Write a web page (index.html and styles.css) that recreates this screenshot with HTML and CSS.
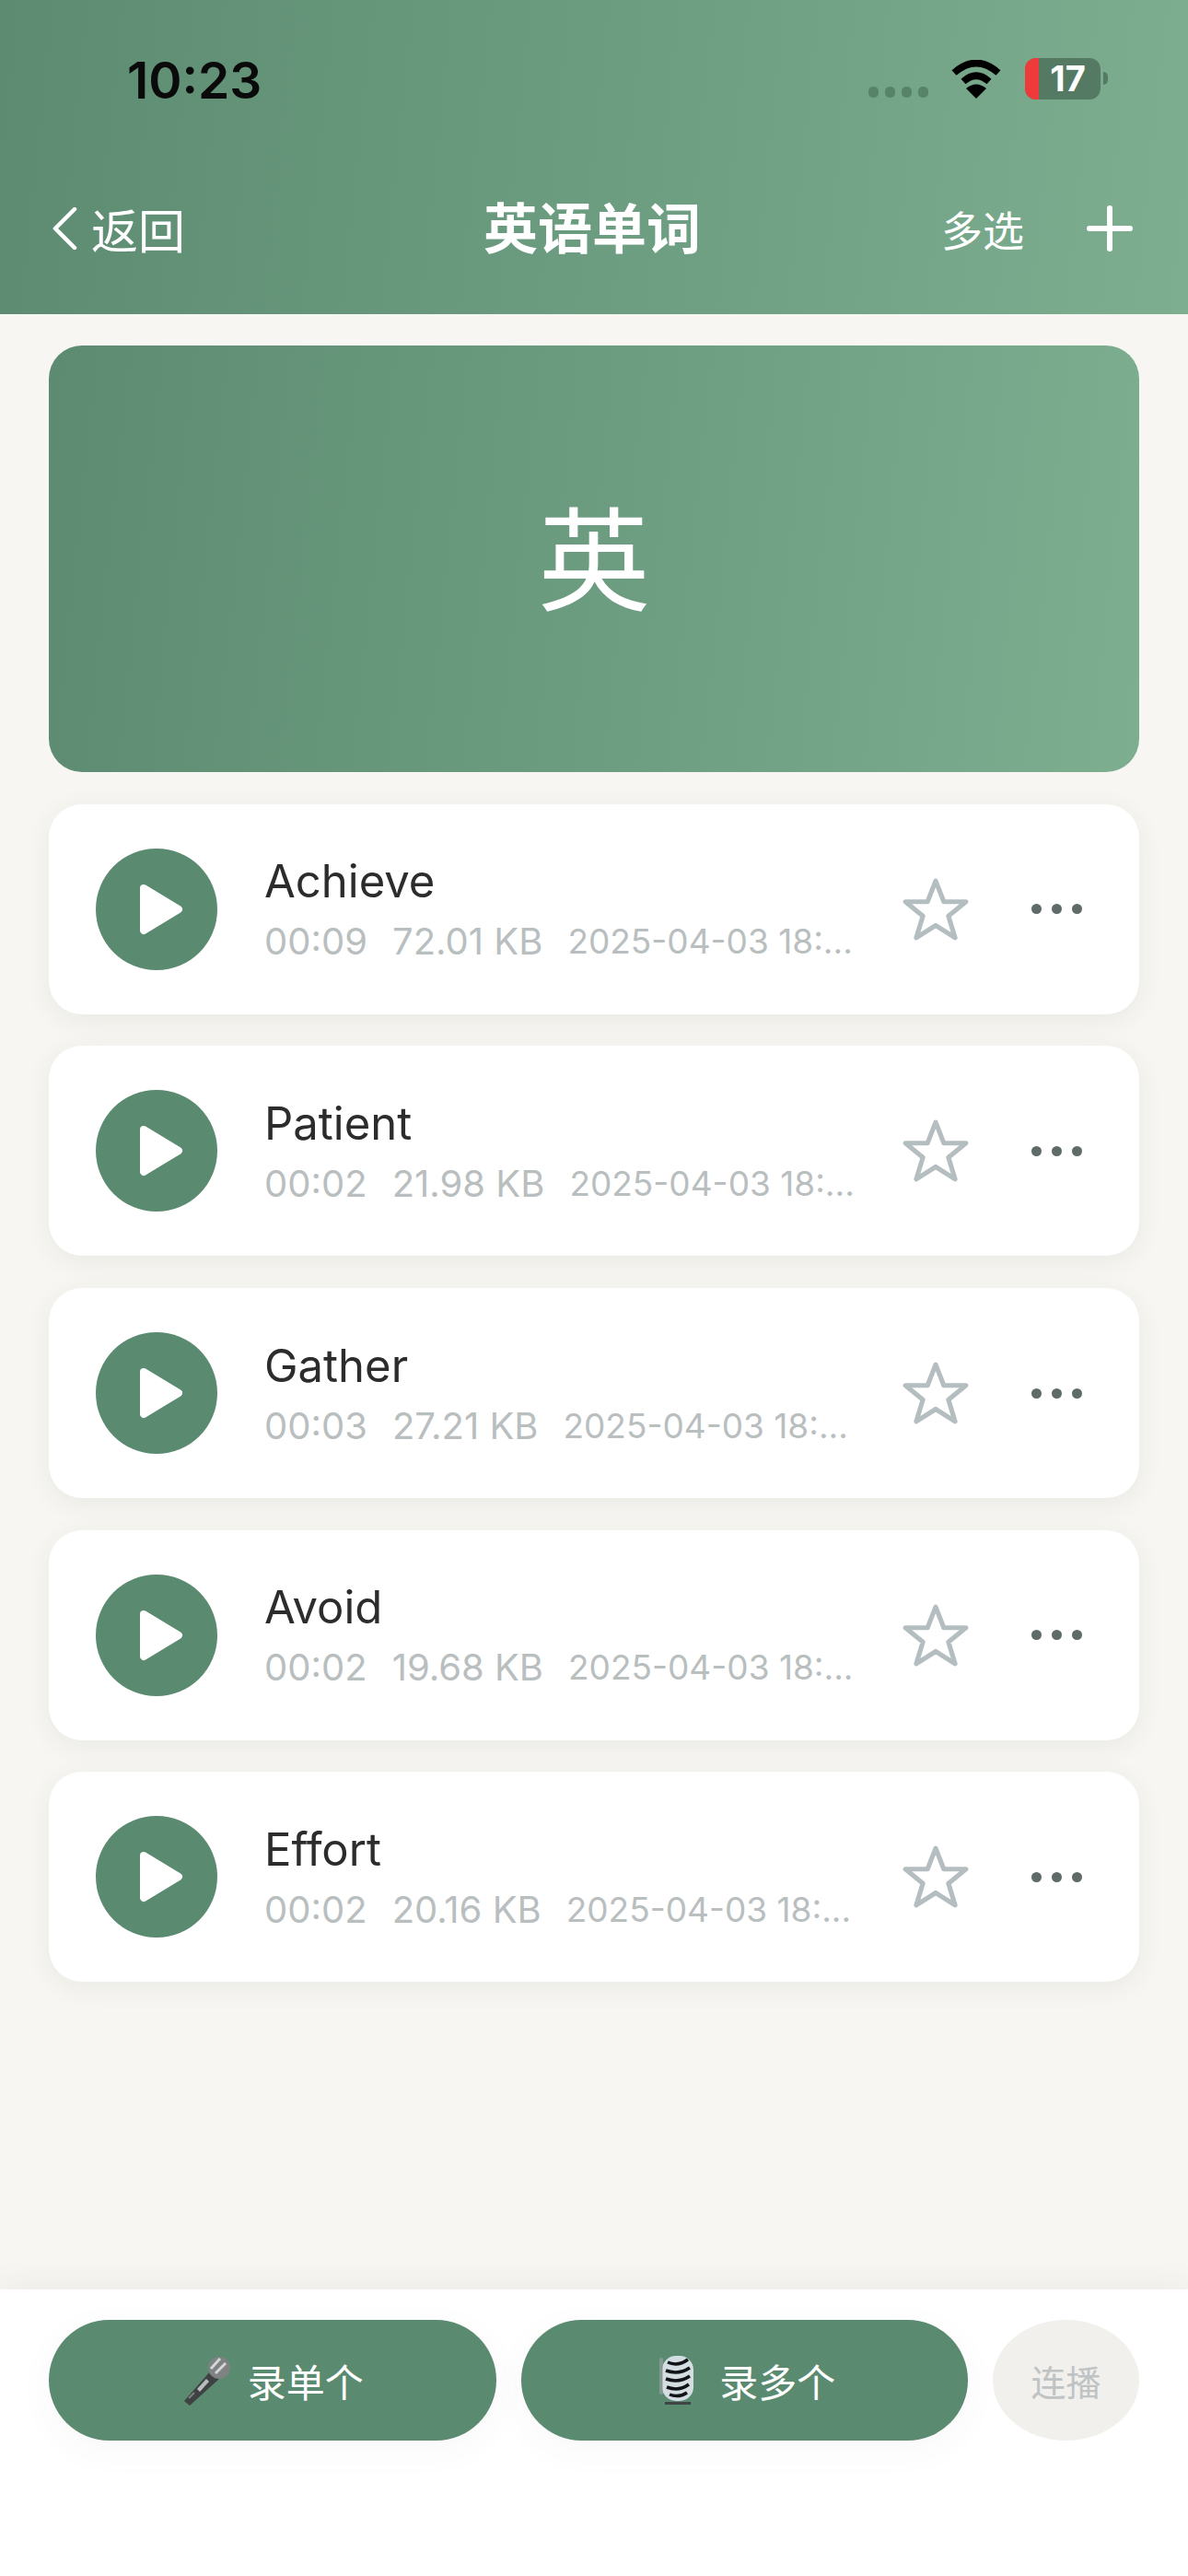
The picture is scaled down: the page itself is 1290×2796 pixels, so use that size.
FILE: index.html
```html
<!DOCTYPE html>
<html lang="zh-CN">
<head>
  <meta charset="UTF-8" />
  <meta name="viewport" content="width=device-width, initial-scale=1.0"/>
  <title>英语单词</title>
  <link rel="stylesheet" href="styles.css">
</head>
<body>

  <svg class="sprites" width="0" height="0">
    <symbol id="play" viewBox="0 0 48 56">
      <path d="M5 5 L43 28 L5 51 Z" fill="#fff" stroke="#fff" stroke-width="8" stroke-linejoin="round"/>
    </symbol>
    <symbol id="star" viewBox="0 0 72 68">
      <path d="M36 4 L44.6 26 L68 26 L49.5 41 L56.5 64 L36 51 L15.5 64 L22.5 41 L4 26 L27.4 26 Z" fill="none" stroke="#b4bec0" stroke-width="5" stroke-linejoin="round"/>
    </symbol>
  </svg>

  <header class="top">
    <div class="status">
      <span class="time">10:23</span>
      <div class="status-right">
        <div class="signal"><i></i><i></i><i></i><i></i></div>
        <svg class="wifi" viewBox="0 0 54 42">
          <path d="M3 14 Q27 -7 51 14" fill="none" stroke="#000" stroke-width="7.5"/>
          <path d="M13 23.5 Q27 11 41 23.5" fill="none" stroke="#000" stroke-width="7.5"/>
          <path d="M16 31 Q27 22 38 31 L27 42 Z" fill="#000"/>
        </svg>
        <div class="battery">
          <span class="battery-low"></span>
          <span class="battery-num">17</span>
        </div>
        <span class="battery-nub"></span>
      </div>
    </div>
    <nav class="nav">
      <div class="back">
        <svg class="chevron" viewBox="0 0 28 46">
          <path d="M25 2 L4 23 L25 44" fill="none" stroke="#fff" stroke-width="4.5" stroke-linecap="round" stroke-linejoin="round"/>
        </svg>
        <span>返回</span>
      </div>
      <h1>英语单词</h1>
      <div class="nav-actions">
        <span>多选</span>
        <span class="plus"></span>
      </div>
    </nav>
  </header>

  <main class="content">
    <div class="banner"><span>英</span></div>

    <div class="card">
      <div class="play"><svg viewBox="0 0 48 56"><use href="#play"/></svg></div>
      <div class="info">
        <div class="name">Achieve</div>
        <div class="meta"><span>00:09</span><span>72.01 KB</span><span class="date">2025-04-03 18:...</span></div>
      </div>
      <svg class="star" viewBox="0 0 72 68"><use href="#star"/></svg>
      <div class="more"><i></i><i></i><i></i></div>
    </div>

    <div class="card">
      <div class="play"><svg viewBox="0 0 48 56"><use href="#play"/></svg></div>
      <div class="info">
        <div class="name">Patient</div>
        <div class="meta"><span>00:02</span><span>21.98 KB</span><span class="date">2025-04-03 18:...</span></div>
      </div>
      <svg class="star" viewBox="0 0 72 68"><use href="#star"/></svg>
      <div class="more"><i></i><i></i><i></i></div>
    </div>

    <div class="card">
      <div class="play"><svg viewBox="0 0 48 56"><use href="#play"/></svg></div>
      <div class="info">
        <div class="name">Gather</div>
        <div class="meta"><span>00:03</span><span>27.21 KB</span><span class="date">2025-04-03 18:...</span></div>
      </div>
      <svg class="star" viewBox="0 0 72 68"><use href="#star"/></svg>
      <div class="more"><i></i><i></i><i></i></div>
    </div>

    <div class="card">
      <div class="play"><svg viewBox="0 0 48 56"><use href="#play"/></svg></div>
      <div class="info">
        <div class="name">Avoid</div>
        <div class="meta"><span>00:02</span><span>19.68 KB</span><span class="date">2025-04-03 18:...</span></div>
      </div>
      <svg class="star" viewBox="0 0 72 68"><use href="#star"/></svg>
      <div class="more"><i></i><i></i><i></i></div>
    </div>

    <div class="card">
      <div class="play"><svg viewBox="0 0 48 56"><use href="#play"/></svg></div>
      <div class="info">
        <div class="name">Effort</div>
        <div class="meta"><span>00:02</span><span>20.16 KB</span><span class="date">2025-04-03 18:...</span></div>
      </div>
      <svg class="star" viewBox="0 0 72 68"><use href="#star"/></svg>
      <div class="more"><i></i><i></i><i></i></div>
    </div>
  </main>

  <footer class="bottom">
    <button class="rec">
      <svg class="mic" viewBox="0 0 54 56">
        <path d="M3 50 L32 17 L41 26 L9 55 Z" fill="#3f4243"/>
        <path d="M17 37 L27 26 L30 29 L20 40 Z" fill="#b9bcbc"/>
        <path d="M8 47 L14 41" stroke="#7d8181" stroke-width="2"/>
        <circle cx="41" cy="14" r="12" fill="#7f8282"/>
        <path d="M32 15 L42 4 M37 20 L48 9" stroke="#d4d6d6" stroke-width="3"/>
      </svg>
      <span>录单个</span>
    </button>
    <button class="rec">
      <svg class="mic" viewBox="0 0 54 56">
        <rect x="10" y="1" width="34" height="49" rx="15" fill="#d4dde2"/>
        <path d="M16 8 Q27 13 38 5 M14 17 Q28 22 40 14 M14 26 Q28 31 40 23 M15 35 Q28 40 39 32 M18 43 Q28 47 37 41" fill="none" stroke="#111517" stroke-width="3.5"/>
        <rect x="7" y="3" width="4" height="40" rx="2" fill="#9fa6a8" opacity="0.6"/>
        <rect x="13" y="51" width="28" height="3" fill="#3f4445"/>
      </svg>
      <span>录多个</span>
    </button>
    <button class="autoplay">连播</button>
  </footer>

</body>
</html>
```

FILE: styles.css
```css
* {
  box-sizing: border-box;
}

body {
  margin: 0;
  height: 2796px;
  display: flex;
  flex-direction: column;
  background: #f7f6f2;
  font-family: Inter, "Noto Sans CJK SC", sans-serif;
  overflow: hidden;
}

.sprites {
  position: absolute;
}

.top {
  height: 341px;
  background: linear-gradient(96deg, #5c8b71, #7dae90);
  color: #fff;
}

.status {
  height: 186px;
  padding: 60px 87px 0 138px;
  display: flex;
  justify-content: space-between;
  align-items: flex-start;
}

.time {
  font-size: 55px;
  font-weight: 600;
  line-height: 54px;
  color: #0a0a0a;
}

.status-right {
  display: flex;
  align-items: flex-start;
  padding-top: 3px;
}

.signal {
  display: flex;
  gap: 7px;
  margin: 31px 25px 0 0;
}

.signal i {
  width: 11px;
  height: 12px;
  border-radius: 5px;
  background: #578369;
}

.wifi {
  width: 54px;
  height: 42px;
  margin: 2px 26px 0 0;
}

.battery {
  width: 82px;
  height: 45px;
  border-radius: 12px;
  background: #547a63;
  position: relative;
  overflow: hidden;
  text-align: center;
  padding-left: 11px;
  font-size: 38px;
  font-weight: 700;
  line-height: 45px;
}

.battery-low {
  position: absolute;
  left: 0;
  top: 0;
  bottom: 0;
  width: 15px;
  background: #ee3a3a;
}

.battery-nub {
  width: 5px;
  height: 14px;
  margin: 15px 0 0 3px;
  border-radius: 0 5px 5px 0;
  background: #547a63;
}

.nav {
  height: 124px;
  padding: 0 60px 0 56px;
  display: grid;
  grid-template-columns: 1fr auto 1fr;
  align-items: center;
}

.nav h1 {
  margin: 0;
  font-size: 59px;
  font-weight: 700;
  line-height: 1;
}

.back {
  display: flex;
  align-items: center;
  gap: 15px;
  font-size: 51px;
}

.chevron {
  width: 28px;
  height: 46px;
}

.nav-actions {
  display: flex;
  align-items: center;
  justify-content: flex-end;
  gap: 68px;
  font-size: 45px;
}

.plus {
  width: 50px;
  height: 50px;
  position: relative;
}

.plus::before,
.plus::after {
  content: "";
  position: absolute;
  background: #fff;
  border-radius: 3px;
}

.plus::before {
  left: 0;
  right: 0;
  top: 22px;
  height: 6px;
}

.plus::after {
  top: 0;
  bottom: 0;
  left: 22px;
  width: 6px;
}

.content {
  flex: 1;
  padding: 34px 53px 0;
  display: flex;
  flex-direction: column;
  gap: 34.7px;
}

.banner {
  height: 463px;
  border-radius: 36px;
  background: linear-gradient(96deg, #5c8b71, #7dae90);
  color: #fff;
  font-size: 122px;
  display: flex;
  align-items: center;
  justify-content: center;
  padding-bottom: 14px;
}

.card {
  height: 228px;
  border-radius: 36px;
  background: #fff;
  box-shadow: 0 6px 28px rgba(60, 70, 60, 0.07);
  padding-left: 51px;
  display: flex;
  align-items: center;
}

.play {
  width: 132px;
  height: 132px;
  flex: none;
  border-radius: 50%;
  background: #5a8a6f;
  display: flex;
  align-items: center;
  justify-content: center;
  padding-left: 10px;
}

.play svg {
  width: 48px;
  height: 56px;
}

.info {
  width: 692px;
  margin-left: 51px;
  flex: none;
}

.name {
  font-size: 49px;
  line-height: 58px;
  color: #2c2c2c;
}

.meta {
  display: flex;
  align-items: center;
  gap: 27px;
  margin-top: 13px;
  font-size: 40px;
  line-height: 46px;
  color: #b9bebf;
  white-space: nowrap;
}

.date {
  font-size: 37px;
}

.star {
  width: 74px;
  height: 70px;
  flex: none;
}

.more {
  margin-left: 67px;
  display: flex;
  gap: 11px;
}

.more i {
  width: 11px;
  height: 11px;
  border-radius: 50%;
  background: #5f6b69;
}

.bottom {
  height: 311px;
  padding: 33px 53px 0;
  background: #fff;
  box-shadow: 0 -8px 30px rgba(60, 60, 50, 0.05);
  display: flex;
  align-items: flex-start;
  gap: 27px;
}

.rec {
  width: 486px;
  height: 131px;
  border: 0;
  border-radius: 66px;
  background: #5a8a6f;
  color: #fff;
  font: inherit;
  font-size: 42px;
  display: flex;
  align-items: center;
  justify-content: center;
  gap: 18px;
  box-shadow: 0 10px 40px rgba(60, 70, 60, 0.04);
}

.mic {
  width: 54px;
  height: 56px;
}

.autoplay {
  width: 159px;
  height: 131px;
  border: 0;
  border-radius: 50%;
  background: #f1f0ec;
  color: #bfc3c4;
  font: inherit;
  font-size: 38px;
  padding: 0;
}
```
